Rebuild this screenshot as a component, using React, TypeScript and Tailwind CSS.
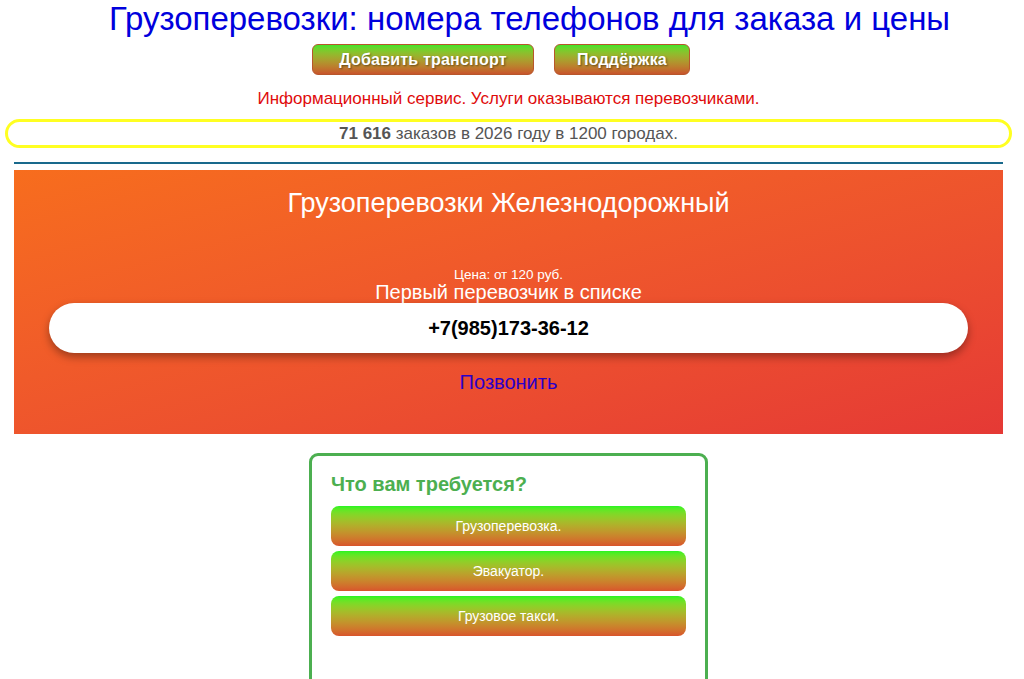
import React from "react";

const services = ["Грузоперевозка.", "Эвакуатор.", "Грузовое такси."];

const TopButton = ({ label, width }: { label: string; width: string }) => (
  <a
    href="#"
    className={`${width} h-[31px] flex items-center justify-center rounded-[6px] border border-[#b8562b] bg-gradient-to-b from-[#3fe32b] to-[#c8542c] text-white font-bold text-[16px] tracking-[0.2px] [text-shadow:1px_1px_2px_rgba(0,0,0,0.45)]`}
  >
    {label}
  </a>
);

export default function App() {
  return (
    <div className="w-[1017px] min-h-[679px] bg-white font-['Liberation_Sans',Arial,sans-serif]">
      <h1 className="pl-[42px] text-center text-[33px] leading-[36px] pt-[1px] text-[#0000dd] font-normal">
        Грузоперевозки: номера телефонов для заказа и цены
      </h1>

      <div className="flex justify-center gap-[20px] mt-[7px] pr-[15px]">
        <TopButton label="Добавить транспорт" width="w-[222px]" />
        <TopButton label="Поддёржка" width="w-[136px]" />
      </div>

      <p className="text-center text-[17px] leading-[20px] text-[#e00b0b] mt-[14px]">
        Информационный сервис. Услуги оказываются перевозчиками.
      </p>

      <div className="mx-[5px] mt-[10px] h-[29px] border-[3px] border-[#ffff22] rounded-full flex items-center justify-center text-[17px] text-[#555]">
        <b>71 616</b>&nbsp;заказов в 2026 году в 1200 городах.
      </div>

      <div className="mx-[14px] mt-[14px] border-t-[2px] border-[#19698c]"></div>

      <section className="mx-[14px] mt-[6px] h-[264px] bg-gradient-to-br from-[#f76d1d] to-[#e53935] flex flex-col items-center text-white">
        <h2 className="text-[27px] leading-[30px] mt-[18px]">Грузоперевозки Железнодорожный</h2>
        <div className="mt-[50px] text-[13.5px] leading-[14px]">Цена: от 120 руб.</div>
        <div className="text-[20px] leading-[21px]">Первый перевозчик в списке</div>
        <div className="self-stretch mx-[35px] h-[50px] rounded-full bg-white shadow-[0_4px_8px_rgba(0,0,0,0.35)] flex items-center justify-center text-black font-bold text-[20px]">
          +7(985)173-36-12
        </div>
        <a href="#" className="mt-[17px] text-[20px] leading-[24px] text-[#2a00c8]">
          Позвонить
        </a>
      </section>

      <div className="flex justify-center mt-[19px]">
        <div className="w-[399px] h-[240px] border-[3px] border-[#4caf50] rounded-[9px] px-[19px] pt-[16px]">
          <h3 className="text-[20px] leading-[24px] font-bold text-[#4caf50]">Что вам требуется?</h3>
          <div className="mt-[10px] flex flex-col gap-[5px]">
            {services.map((s) => (
              <a
                key={s}
                href="#"
                className="h-[40px] rounded-[8px] bg-gradient-to-b from-[#22f522] to-[#d8542c] flex items-center justify-center text-white text-[14px]"
              >
                {s}
              </a>
            ))}
          </div>
        </div>
      </div>
    </div>
  );
}
